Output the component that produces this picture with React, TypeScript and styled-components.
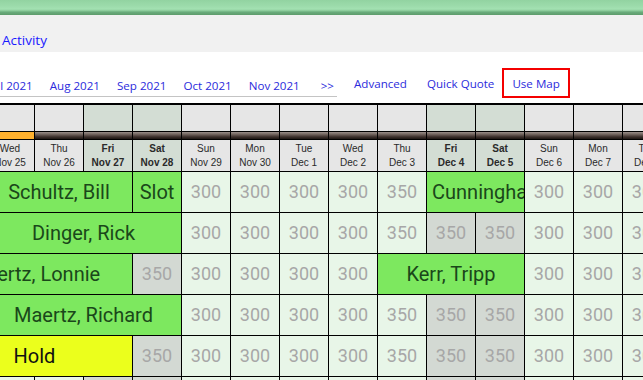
import React from 'react';
import styled, { createGlobalStyle } from 'styled-components';

const GlobalStyle = createGlobalStyle`
  html, body {
    margin: 0;
    padding: 0;
    background: #fff;
    overflow: hidden;
  }
  body {
    font-family: 'Open Sans', sans-serif;
  }
`;

const Page = styled.div`
  width: 643px;
  height: 380px;
  overflow: hidden;
`;

const TopBar = styled.div`
  height: 15px;
  background: linear-gradient(
    to bottom,
    #92d3a1 0px,
    #9cdbab 6px,
    #a3e1b2 9px,
    #86c796 11px,
    #6aac7c 12px,
    #5e9c6c 15px
  );
`;

const TitleBand = styled.div`
  height: 37px;
  box-sizing: border-box;
  padding: 16px 0 0 2px;
  background: #f1f1f1;
`;

const Title = styled.a`
  display: block;
  font-family: 'Open Sans', sans-serif;
  font-size: 13.5px;
  line-height: 18px;
  color: #1a1aff;
  text-decoration: none;
`;

const Nav = styled.nav`
  display: flex;
  align-items: flex-start;
  height: 30px;
  margin: 16px 0 5px -18px;
`;

const MonthGroup = styled.div`
  display: flex;
  align-items: center;
  gap: 17px;
  height: 25px;
  padding: 3px 3px 0 8px;
  border-bottom: 1px solid #c4c4c4;
`;

const NavLink = styled.a<{ $gap?: number; $boxed?: boolean }>`
  display: flex;
  align-items: center;
  box-sizing: border-box;
  height: ${p => (p.$boxed ? '30px' : '28px')};
  margin-left: ${p => p.$gap ?? 0}px;
  padding: ${p => (p.$boxed ? '0 8px' : '0')};
  padding-top: ${p => (p.$boxed ? '0' : '3px')};
  border: ${p => (p.$boxed ? '2px solid #f40000' : 'none')};
  font-size: 11.6px;
  color: #2b2bdc;
  text-decoration: none;
  white-space: nowrap;
`;

const Grid = styled.div`
  display: grid;
  grid-template-columns: repeat(16, 48px);
  grid-template-rows: 26px 7px 31px repeat(6, 40px);
  gap: 1px;
  width: max-content;
  margin-left: -64px;
  padding: 0 1px;
  border-top: 2px solid #000;
  background: #000;
`;

const HeadCell = styled.div<{ $weekend: boolean }>`
  background: ${p => (p.$weekend ? '#d3ddd4' : '#e6e6e6')};
`;

const BarCell = styled.div<{ $today: boolean }>`
  background: ${p =>
    p.$today
      ? '#ffb12e'
      : 'linear-gradient(to bottom, #9a8f8a 0%, #6e615b 35%, #3b2f2b 70%, #1d1613 100%)'};
`;

const DateCell = styled.div<{ $weekend: boolean }>`
  display: flex;
  flex-direction: column;
  align-items: center;
  justify-content: center;
  background: ${p => (p.$weekend ? '#d3ddd4' : '#e6e6e6')};
  font-family: 'Liberation Sans', Arial, sans-serif;
  font-size: 10px;
  line-height: 14px;
  font-weight: ${p => (p.$weekend ? 700 : 400)};
  color: #2a2a2a;
  white-space: nowrap;
`;

type Kind = 'name' | 'hold' | 'rate' | 'rateWk';

const cellBg: Record<Kind, string> = {
  name: '#7de85f',
  hold: '#ebff1c',
  rate: '#e8f6e8',
  rateWk: '#d3d9d3',
};

const cellColor: Record<Kind, string> = {
  name: '#1a471a',
  hold: '#111',
  rate: '#a7a7a7',
  rateWk: '#a7a7a7',
};

const BookCell = styled.div<{ $kind: Kind; $span: number }>`
  grid-column: span ${p => p.$span};
  box-sizing: border-box;
  padding: 0 5px;
  overflow: hidden;
  background: ${p => cellBg[p.$kind]};
  color: ${p => cellColor[p.$kind]};
  font-family: Roboto, sans-serif;
  font-size: ${p => (p.$kind === 'name' || p.$kind === 'hold' ? '20px' : '18px')};
  line-height: 40px;
  text-align: center;
  white-space: nowrap;
`;

const days = [
  ['Tue', 'Nov 24'],
  ['Wed', 'Nov 25'],
  ['Thu', 'Nov 26'],
  ['Fri', 'Nov 27'],
  ['Sat', 'Nov 28'],
  ['Sun', 'Nov 29'],
  ['Mon', 'Nov 30'],
  ['Tue', 'Dec 1'],
  ['Wed', 'Dec 2'],
  ['Thu', 'Dec 3'],
  ['Fri', 'Dec 4'],
  ['Sat', 'Dec 5'],
  ['Sun', 'Dec 6'],
  ['Mon', 'Dec 7'],
  ['Tue', 'Dec 8'],
  ['Wed', 'Dec 9'],
];

type Booking = { kind: Kind; text: string; span?: number };

const r = (text: string): Booking => ({ kind: 'rate', text });
const w = (text: string): Booking => ({ kind: 'rateWk', text });
const n = (text: string, span: number): Booking => ({ kind: 'name', text, span });

const weekTail = [r('350'), w('350'), w('350'), r('300'), r('300'), r('300'), r('300')];
const fourWeekdays = [r('300'), r('300'), r('300'), r('300')];

const rows: Booking[][] = [
  [r('300'), n('Schultz, Bill', 3), n('Slot', 1), ...fourWeekdays, r('350'), n('Cunningham', 2), r('300'), r('300'), r('300'), r('300')],
  [r('300'), n('Dinger, Rick', 4), ...fourWeekdays, ...weekTail],
  [n('Maertz, Lonnie', 4), w('350'), ...fourWeekdays, n('Kerr, Tripp', 3), r('300'), r('300'), r('300'), r('300')],
  [r('300'), n('Maertz, Richard', 4), ...fourWeekdays, ...weekTail],
  [{ kind: 'hold', text: 'Hold', span: 4 }, w('350'), ...fourWeekdays, ...weekTail],
  [r('300'), r('300'), r('300'), w('350'), w('350'), ...fourWeekdays, ...weekTail],
];

const months = ['Jul 2021', 'Aug 2021', 'Sep 2021', 'Oct 2021', 'Nov 2021'];

const App = () => (
  <Page>
    <GlobalStyle />
    <TopBar />
    <TitleBand>
      <Title href="#">Activity</Title>
    </TitleBand>
    <Nav>
      <MonthGroup>
        {months.map(m => (
          <NavLink key={m} href="#">
            {m}
          </NavLink>
        ))}
        <NavLink href="#" $gap={4}>
          &gt;&gt;
        </NavLink>
      </MonthGroup>
      <NavLink href="#" $gap={17}>
        Advanced
      </NavLink>
      <NavLink href="#" $gap={20}>
        Quick Quote
      </NavLink>
      <NavLink href="#" $gap={8} $boxed>
        Use Map
      </NavLink>
    </Nav>
    <Grid>
      {days.map(([d], i) => (
        <HeadCell key={`h${i}`} $weekend={d === 'Fri' || d === 'Sat'} />
      ))}
      {days.map((_, i) => (
        <BarCell key={`b${i}`} $today={i === 1} />
      ))}
      {days.map(([d, date], i) => (
        <DateCell key={`d${i}`} $weekend={d === 'Fri' || d === 'Sat'}>
          <span>{d}</span>
          <span>{date}</span>
        </DateCell>
      ))}
      {rows.map((row, ri) =>
        row.map((c, ci) => (
          <BookCell key={`${ri}-${ci}`} $kind={c.kind} $span={c.span ?? 1}>
            {c.text}
          </BookCell>
        ))
      )}
    </Grid>
  </Page>
);

export default App;
